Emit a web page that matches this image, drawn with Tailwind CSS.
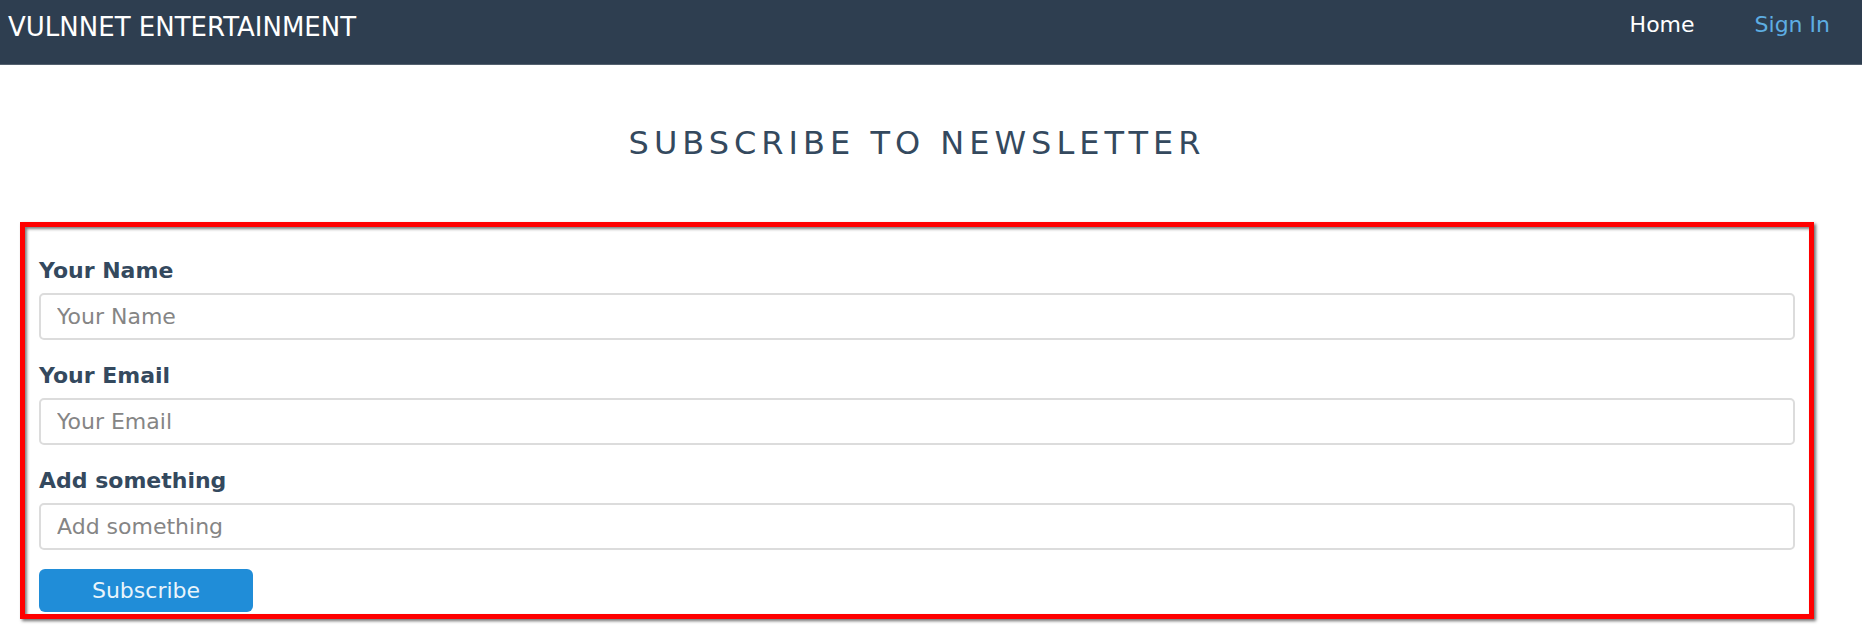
<!DOCTYPE html>
<html lang="en">
<head>
<meta charset="utf-8">
<title>VulnNet Entertainment</title>
<script src="https://cdn.jsdelivr.net/npm/@tailwindcss/browser@4"></script>
</head>
<body class="min-h-screen bg-white font-['DejaVu_Sans',sans-serif] text-[#34495e]">
<header class="flex h-[65px] items-start justify-between border-b border-[#54616f] bg-[#2e3e50] pr-8 pl-2 text-white">
  <a href="#" class="pt-[13px] text-[26px] leading-7">VULNNET ENTERTAINMENT</a>
  <nav class="flex gap-15 pt-[13px] text-[22px] leading-6">
    <a href="#">Home</a>
    <a href="#" class="text-[#5dade2]">Sign In</a>
  </nav>
</header>
<main class="pr-12 pb-4 pl-5">
  <h1 class="pt-[58px] text-center text-[32px] leading-10 tracking-[5px]">SUBSCRIBE TO NEWSLETTER</h1>
  <form class="mt-[59px] border-5 border-[#ff0000] px-[14px] pt-[30px] pb-[2px] text-[22px] leading-7 shadow-[2px_2px_3px_#00000090,inset_2px_2px_3px_#00000080]">
    <label for="name" class="block font-bold">Your Name</label>
    <input id="name" type="text" placeholder="Your Name" class="mt-2 mb-[22px] block h-[47px] w-full rounded-[5px] border-2 border-[#dcdcdc] px-4 placeholder:text-[#858585]">
    <label for="email" class="block font-bold">Your Email</label>
    <input id="email" type="email" placeholder="Your Email" class="mt-2 mb-[22px] block h-[47px] w-full rounded-[5px] border-2 border-[#dcdcdc] px-4 placeholder:text-[#858585]">
    <label for="extra" class="block font-bold">Add something</label>
    <input id="extra" type="text" placeholder="Add something" class="mt-2 mb-[19px] block h-[47px] w-full rounded-[5px] border-2 border-[#dcdcdc] px-4 placeholder:text-[#858585]">
    <button type="submit" class="block h-[43px] min-w-[214px] rounded-md bg-[#208dd8] px-12 text-[#e9f4fb]">Subscribe</button>
  </form>
</main>
</body>
</html>
